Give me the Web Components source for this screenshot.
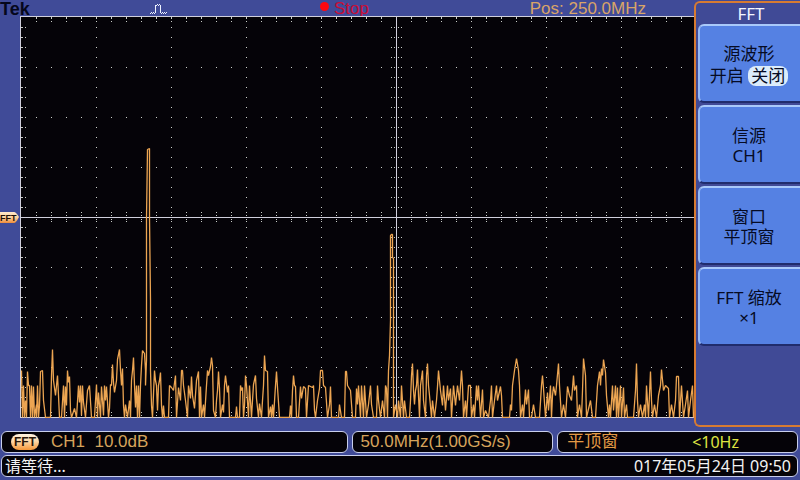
<!DOCTYPE html>
<html lang="zh-CN">
<head>
<meta charset="utf-8">
<title>FFT</title>
<style>
html, body { height: 100%; margin: 0; }
body { background: #404b98; }
</style>
</head>
<body>
<scope-screen></scope-screen>
<script>
const SANS = '"Liberation Sans", "Noto Sans CJK SC", sans-serif';
const NOTO = '"Noto Sans", "Noto Sans CJK SC", sans-serif';

function define(name, html, setup) {
  const template = document.createElement('template');
  template.innerHTML = html.trim();
  customElements.define(name, class extends HTMLElement {
    constructor() {
      super();
      this.attachShadow({ mode: 'open' }).append(template.content.cloneNode(true));
      if (setup) setup(this.shadowRoot);
    }
  });
}

define('scope-header', `
<style>
:host { display: grid; grid-template-columns: 150px 168px 1fr auto; align-items: center; height: 16px; padding-right: 48px; font: 17px/18px ${SANS}; white-space: nowrap; }
.brand { font-weight: bold; font-size: 18px; color: #05071c; line-height: 16px; }
.stop { display: flex; align-items: center; gap: 5px; color: #c90d36; }
.stop i { width: 9px; height: 9px; border-radius: 5px; background: #ff0810; margin: 0 0 5px 2px; }
.pos { color: #d8a468; }
svg { display: block; margin-top: 1px; }
</style>
<span class="brand">Tek</span>
<svg width="18" height="11" viewBox="0 0 18 11" aria-hidden="true" fill="none" stroke="#eef2ff" shape-rendering="crispEdges"><path d="M0 9.500H1M1 8.500H2M2 9.500H3M3 8.500H4M4 9.500H5M5.500 1V9M6 1.500H7M7 .500H8M8 1.500H9M9 .500H10M10.500 1V9M11 9.500H12M12 8.500H13M13 9.500H14M14 8.500H15M15 9.500H16M16 8.500H17"/></svg>
<span class="stop"><i></i><span>Stop</span></span>
<span class="pos">Pos: 250.0MHz</span>`);

const TRACE = `21,370 22,417 23,385 24,417 25,400 26,417 27,371 28,385 29,385 30,417 31,385 32,417 33,386 34,417 35,410 36,404 36,417 37,385 38,417 39,405 40,371 42,370 43,400 45,417 50,417 51,375 52,349 53,380 55,395 57,375 58,395 59,417 61,417 63,385 64,417 65,386 66,405 67,370 68,382 69,376 70,410 71,417 74,408 76,417 78,385 79,402 80,385 81,415 82,385 83,402 85,417 87,390 89,385 91,417 94,417 96,384 97,417 98,392 100,417 101,386 103,415 104,385 105,400 106,386 108,417 109,408 110,384 111,385 112,364 113,382 114,392 116,380 117,359 118,354 119,349 120,370 121,385 122,368 123,405 124,417 125,404 127,417 129,400 130,417 131,380 132,370 133,357 134,385 135,407 136,385 137,417 138,385 139,417 140,385 141,365 142,350 144,353 145,370 145,385 146,360 146,217 147,149 149,148 149,217 150,300 150,370 151,405 152,417 154,370 155,380 156,385 157,410 158,385 159,380 160,372 161,405 162,417 163,405 164,417 168,417 169,385 171,387 173,390 175,375 176,417 178,387 180,400 181,370 182,370 183,385 185,400 187,417 188,385 190,398 191,376 192,395 194,408 196,380 198,371 199,417 200,386 201,417 203,404 204,417 206,385 207,370 208,375 210,366 211,357 212,365 213,410 215,417 216,400 217,390 218,371 219,388 220,417 222,404 223,412 224,385 225,375 227,392 228,385 229,417 235,417 236,406 237,417 239,417 240,385 241,390 242,387 243,417 244,405 245,375 246,385 248,417 249,385 251,417 252,400 253,384 255,375 256,398 258,417 259,403 261,417 262,400 263,385 264,355 265,370 267,371 268,417 270,406 271,417 272,404 273,417 275,385 276,371 277,387 279,417 289,417 290,405 291,417 292,390 293,375 294,385 295,386 296,417 298,417 300,386 301,398 303,386 305,388 306,417 308,385 310,386 312,387 313,385 314,410 315,417 317,400 319,388 320,370 322,370 323,385 325,387 327,417 329,404 330,386 331,417 338,417 339,404 341,417 344,417 345,371 346,371 347,385 350,390 352,417 355,417 356,388 357,404 358,385 360,417 361,385 363,417 364,385 366,417 368,404 370,385 371,404 373,417 376,417 377,385 378,400 380,417 382,400 384,417 385,385 386,388 387,417 388,370 389,355 390,320 390,235 391,234 392,234 392,257 393,258 393,417 395,404 397,417 398,400 400,417 401,385 403,417 404,400 406,417 409,417 410,400 411,375 412,363 413,390 414,404 415,390 416,385 417,369 418,395 419,417 420,385 422,370 423,400 425,417 426,375 427,363 428,385 429,395 431,417 432,400 434,417 436,400 437,386 438,370 440,390 442,405 443,385 445,410 447,385 448,400 450,388 451,417 453,385 455,405 457,385 459,400 461,370 462,385 463,417 465,400 466,417 468,385 470,385 471,417 473,404 474,417 476,385 477,400 478,385 480,417 482,389 483,417 485,410 488,417 490,400 491,385 492,417 494,400 496,385 497,400 500,386 501,395 502,417 509,417 510,404 511,410 512,385 514,370 516,358 518,370 519,385 520,417 522,404 523,417 525,389 526,404 528,389 529,417 531,417 533,404 535,417 539,417 541,385 542,375 543,388 545,417 547,392 548,410 550,385 551,417 552,395 553,386 555,395 556,385 558,363 559,385 561,417 563,404 565,417 567,386 569,395 571,400 573,375 574,390 576,385 577,417 579,404 581,417 582,390 583,358 585,375 586,417 590,400 592,417 595,417 597,385 599,371 600,385 601,368 602,375 603,359 605,372 606,395 608,417 609,404 610,417 612,385 613,410 615,385 616,417 617,387 618,417 620,385 621,417 623,387 624,417 626,404 627,417 633,417 635,390 636,363 637,400 638,417 640,404 642,417 644,404 645,417 646,385 648,417 650,371 651,400 652,417 654,404 656,417 658,395 660,385 661,369 663,390 665,385 668,388 669,417 671,404 673,417 675,400 676,376 678,376 679,417 681,385 683,417 685,404 687,390 688,417 690,400 692,385 693,417`;

define('spectrum-plot', `
<style>
:host { display: block; min-width: 0; height: 402px; background: #050308; }
svg { display: block; width: 100%; height: 100%; }
</style>
<svg viewBox="20 16 674 402" preserveAspectRatio="none" role="img" aria-label="FFT">
<path class="dots" fill="#c9cdc8" shape-rendering="crispEdges"/>
<path fill="#d0cfdc" shape-rendering="crispEdges" d="M20 16H694V17H20ZM20 16H21V418H20ZM20 417H694V418H20ZM20 217H694V218H20ZM396 16H397V418H396Z"/>
<polyline fill="none" stroke="#eca552" stroke-width="1.300" stroke-linejoin="bevel" transform="translate(.5 .5)"/>
</svg>`, root => {
  let d = '';
  const dot = (x, y) => { d += `M${x} ${y}h1v1h-1z`; };
  for (let y = 27; y < 417; y += 10) {
    dot(21, y); dot(22, y); dot(25, y);
    for (let x = 96; x < 694; x += 75) dot(x, y);
    for (const x of [391, 394, 398, 401]) dot(x, y);
  }
  for (let x = 36; x < 694; x += 15) {
    for (let y = 67; y < 417; y += 50) dot(x, y);
    for (const y of [17, 18, 21, 212, 215, 219, 221, 412, 415]) dot(x, y);
  }
  root.querySelector('.dots').setAttribute('d', d);
  root.querySelector('polyline').setAttribute('points', TRACE);
});

define('channel-marker', `
<style>
:host { display: block; width: 20px; }
svg { display: block; }
text { font: bold 9px ${SANS}; fill: #201008; }
</style>
<svg width="20" height="12" viewBox="0 0 20 12">
<defs><linearGradient id="m" x2="0" y2="1"><stop offset="0" stop-color="#ffe9cc"/><stop offset=".5" stop-color="#ffd09a"/><stop offset="1" stop-color="#ee8b3a"/></linearGradient></defs>
<path d="M0 1H14Q16 1 19 6Q16 12 14 12H0Z" fill="url(#m)"/><text x="0" y="10">FFT</text></svg>`);

define('channel-badge', `
<style>
:host { display: block; width: 28px; height: 16px; border-radius: 8px; background: linear-gradient(#fff3e2, #ffd9a8 45%, #f59638); color: #2a1608; font: bold 12px/17px ${SANS}; text-align: center; white-space: nowrap; }
</style><slot></slot>`);

define('menu-item', `
<style>
:host { display: block; }
button { display: block; width: 100%; height: 79px; padding: 2px 2px 0 0; border: 0; border-top: 2px solid #a9c9fa; border-left: 2px solid #94b8f5; border-bottom: 2px solid #202c6c; border-radius: 6px 0 0 6px; background: #5581e3; color: #060b24; font: 17px/20px ${NOTO}; }
</style>
<button type="button"><slot></slot></button>`);

define('option-pill', `
<style>
:host { display: inline-block; margin-top: 2px; padding: 0 3px; border-radius: 8px; background: #dcecfa; line-height: 20px; }
</style><slot></slot>`);

define('side-menu', `
<style>
:host { display: flex; flex-direction: column; box-sizing: border-box; height: 426px; border: 2px solid #d77b32; border-right: 0; border-radius: 6px 0 0 6px; background: #404a96; padding-left: 2px; }
h1 { margin: 0; height: 21px; padding-left: 4px; text-align: center; font: 17px/22px ${NOTO}; color: #f4f6ff; }
nav { display: flex; flex-direction: column; gap: 2px; }
</style>
<h1>FFT</h1>
<nav>
<menu-item>源波形<br>开启 <option-pill>关闭</option-pill></menu-item>
<menu-item>信源<br>CH1</menu-item>
<menu-item>窗口<br>平顶窗</menu-item>
<menu-item>FFT 缩放<br>×1</menu-item>
</nav>`);

define('readout-box', `
<style>
:host { display: flex; align-items: center; box-sizing: border-box; min-width: 0; height: 22px; padding: 0 8px; border: 1px solid #c9cfec; border-radius: 6px; background: #050308; color: #d6a35c; font: 17px/20px ${SANS}; white-space: pre; }
</style><slot></slot>`);

define('status-area', `
<style>
:host { display: grid; gap: 2px; padding: 0 2px 0 1px; }
.row { display: grid; grid-template-columns: 347fr 202fr 241fr; gap: 4px; }
channel-badge { margin: 0 12px 0 1px; }
.hz { margin-left: auto; padding-right: 50px; font: 16px/20px ${NOTO}; color: #dfe342; }
.win { color: #e39a45; padding-left: 1px; }
.message { font: 16px/20px ${NOTO}; color: #f3f3f3; padding: 0 6px 0 3px; justify-content: space-between; }
</style>
<div class="row">
<readout-box><channel-badge>FFT</channel-badge><span>CH1  10.0dB</span></readout-box>
<readout-box>50.0MHz(1.00GS/s)</readout-box>
<readout-box><span class="win">平顶窗</span><span class="hz">&lt;10Hz</span></readout-box>
</div>
<readout-box class="message"><span>请等待...</span><time datetime="2017-05-24T09:50">017年05月24日 09:50</time></readout-box>`);

define('scope-screen', `
<style>
:host { display: flex; flex-direction: column; gap: 4px; min-height: 100%; background: #404b98; }
.top { display: grid; grid-template-columns: 1fr 106px; }
.view { display: grid; grid-template-columns: 20px 1fr; align-items: center; }
side-menu { margin-top: 1px; }
</style>
<div class="top">
<div><scope-header></scope-header><div class="view"><channel-marker></channel-marker><spectrum-plot></spectrum-plot></div></div>
<side-menu></side-menu>
</div>
<status-area></status-area>`);
</script>
</body>
</html>
